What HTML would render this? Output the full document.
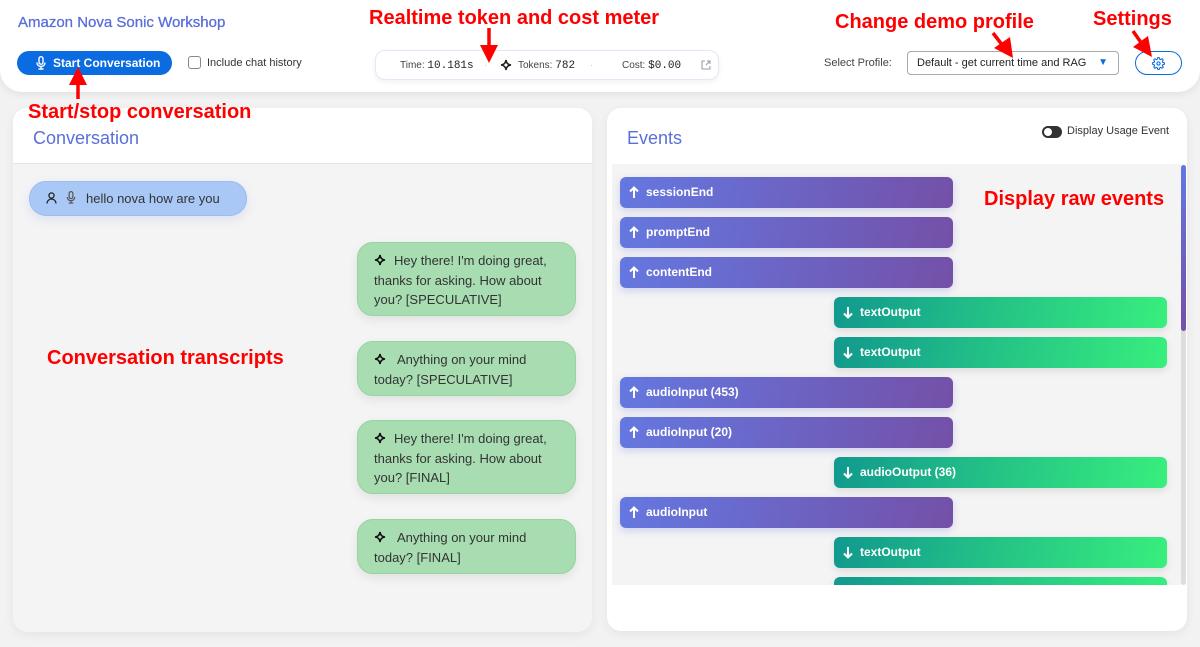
<!DOCTYPE html>
<html><head><meta charset="utf-8"><style>
*{box-sizing:border-box;margin:0;padding:0}
body{width:1200px;height:647px;background:#f2f2f2;font-family:"Liberation Sans",sans-serif;position:relative;overflow:hidden}
.a{position:absolute}
.red{position:absolute;color:#f00;font-weight:bold;font-size:20px;white-space:nowrap}
.hdr{left:0;top:0;width:1200px;height:92px;background:#fff;border-radius:0 0 22px 22px;box-shadow:0 2px 8px rgba(0,0,0,.08)}
.ev{position:absolute;height:31px;border-radius:6px;color:#fff;font-weight:bold;font-size:12px;line-height:31px;padding-left:26px;box-shadow:0 3px 8px rgba(100,110,220,.25)}
.ev svg{position:absolute;left:9px;top:9px}
.up{left:620px;width:333px;background:linear-gradient(100deg,#6478e0,#7450a8)}
.dn{left:834px;width:333px;background:linear-gradient(100deg,#11998e,#38ef7d);box-shadow:0 3px 8px rgba(0,0,0,.1)}
.gb{position:absolute;left:357px;width:219px;background:#a8ddb2;border:1px solid #96d3a2;border-radius:16px;font-size:13px;color:#333;line-height:19.5px;padding:8px 16px;box-shadow:0 4px 10px rgba(0,0,0,.08)}
.sp{display:inline-block;vertical-align:-1px;margin-right:8px}
</style></head><body>
<div class="a hdr"></div>
<div class="a" style="left:18px;top:14px;font-size:15px;color:#5a6fd8;-webkit-text-stroke:0.3px #5a6fd8">Amazon Nova Sonic Workshop</div>
<div class="a" style="left:17px;top:51px;width:155px;height:24px;background:#0b6be0;border-radius:12px;color:#fff;font-size:12px;font-weight:bold;line-height:24px;padding-left:36px">
<svg class="a" style="left:19px;top:5px" width="10" height="14" viewBox="0 0 10 14" fill="none" stroke="#fff" stroke-width="1.4"><rect x="3" y="0.7" width="4" height="7.5" rx="2"/><path d="M1 6.5a4 4 0 0 0 8 0M5 10.5v2.5M2.5 13h5"/></svg>Start Conversation</div>
<div class="a" style="left:188px;top:56px;width:13px;height:13px;border:1px solid #888;border-radius:3px"></div>
<div class="a" style="left:207px;top:57px;font-size:11px;color:#333">Include chat history</div>
<div class="a" style="left:375px;top:50px;width:344px;height:30px;background:#fff;border:1px solid #e2e8f8;border-radius:10px;box-shadow:0 2px 6px rgba(0,0,0,.06);font-size:10px;color:#444">
<span class="a" style="left:24px;top:9px">Time: <span style="font-family:'Liberation Mono',monospace;font-size:11px;color:#222">10.181s</span></span>
<span class="a" style="left:108px;top:9px;color:#ccc">·</span>
<svg class="a" style="left:124px;top:8px" width="12" height="12" viewBox="0 0 12 12" fill="none" stroke="#222" stroke-width="1.6"><path d="M6 1Q6.5 5.5 11 6Q6.5 6.5 6 11Q5.5 6.5 1 6Q5.5 5.5 6 1Z"/></svg>
<span class="a" style="left:142px;top:9px">Tokens: <span style="font-family:'Liberation Mono',monospace;font-size:11px;color:#222">782</span></span>
<span class="a" style="left:214px;top:9px;color:#ccc">·</span>
<span class="a" style="left:246px;top:9px">Cost: <span style="font-family:'Liberation Mono',monospace;font-size:11px;color:#222">$0.00</span></span>
<svg class="a" style="left:325px;top:9px" width="10" height="10" viewBox="0 0 10 10" fill="none" stroke="#999" stroke-width="1"><path d="M4 1H1v8h8V6M5 5l4-4M6 1h3v3"/></svg>
</div>
<div class="a" style="left:824px;top:57px;font-size:11px;color:#444">Select Profile:</div>
<div class="a" style="left:907px;top:51px;width:212px;height:24px;border:1px solid #aaa;border-radius:4px;font-size:11px;color:#222;line-height:22px;padding-left:9px">Default - get current time and RAG<span class="a" style="right:10px;top:0;color:#0b6be0;font-size:10px">▼</span></div>
<div class="a" style="left:1135px;top:51px;width:47px;height:24px;border:1.5px solid #0b6be0;border-radius:12px">
<svg class="a" style="left:16px;top:5px" width="13" height="13" viewBox="0 0 24 24" fill="none" stroke="#0b6be0" stroke-width="2"><circle cx="12" cy="12" r="3"/><path d="M19.4 15a1.7 1.7 0 0 0 .3 1.8l.1.1a2 2 0 1 1-2.8 2.8l-.1-.1a1.7 1.7 0 0 0-1.8-.3 1.7 1.7 0 0 0-1 1.5V21a2 2 0 1 1-4 0v-.1a1.7 1.7 0 0 0-1.1-1.5 1.7 1.7 0 0 0-1.8.3l-.1.1a2 2 0 1 1-2.8-2.8l.1-.1a1.7 1.7 0 0 0 .3-1.8 1.7 1.7 0 0 0-1.5-1H3a2 2 0 1 1 0-4h.1a1.7 1.7 0 0 0 1.5-1.1 1.7 1.7 0 0 0-.3-1.8l-.1-.1a2 2 0 1 1 2.8-2.8l.1.1a1.7 1.7 0 0 0 1.8.3H9a1.7 1.7 0 0 0 1-1.5V3a2 2 0 1 1 4 0v.1a1.7 1.7 0 0 0 1 1.5 1.7 1.7 0 0 0 1.8-.3l.1-.1a2 2 0 1 1 2.8 2.8l-.1.1a1.7 1.7 0 0 0-.3 1.8V9a1.7 1.7 0 0 0 1.5 1H21a2 2 0 1 1 0 4h-.1a1.7 1.7 0 0 0-1.5 1z"/></svg></div>

<!-- left panel -->
<div class="a" style="left:13px;top:108px;width:579px;height:524px;background:#f4f4f4;border-radius:14px;box-shadow:0 3px 10px rgba(0,0,0,.06);overflow:hidden">
<div class="a" style="left:0;top:0;width:579px;height:56px;background:#fff;border-bottom:1px solid #e6e6e6"></div>
</div>
<div class="a" style="left:33px;top:128px;font-size:18px;color:#5a6fd8">Conversation</div>
<div class="a" style="left:29px;top:181px;width:218px;height:35px;background:#a9c8f6;border:1px solid #9cbdf0;border-radius:17px;box-shadow:0 4px 10px rgba(100,120,220,.15);font-size:13px;color:#333;line-height:33px;padding-left:56px">
<svg class="a" style="left:16px;top:10px" width="11" height="12" viewBox="0 0 11 12" fill="none" stroke="#222" stroke-width="1.3"><circle cx="5.5" cy="3.5" r="2.6"/><path d="M1 11.5a4.5 4.5 0 0 1 9 0"/></svg>
<svg class="a" style="left:36px;top:9px" width="10" height="13" viewBox="0 0 10 14" fill="none" stroke="#555" stroke-width="1.3"><rect x="3" y="0.7" width="4" height="7.5" rx="2"/><path d="M1 6.5a4 4 0 0 0 8 0M5 10.5v2.5M2.5 13h5"/></svg>hello nova how are you</div>
<div class="gb" style="top:242px;height:74px"><svg class="sp" width="12" height="12" viewBox="0 0 12 12" fill="none" stroke="#111" stroke-width="1.6"><path d="M6 1Q6.5 5.5 11 6Q6.5 6.5 6 11Q5.5 6.5 1 6Q5.5 5.5 6 1Z"/></svg>Hey there! I'm doing great, thanks for asking. How about you? [SPECULATIVE]</div>
<div class="gb" style="top:341px;height:55px"><svg class="sp" style="margin-right:11px" width="12" height="12" viewBox="0 0 12 12" fill="none" stroke="#111" stroke-width="1.6"><path d="M6 1Q6.5 5.5 11 6Q6.5 6.5 6 11Q5.5 6.5 1 6Q5.5 5.5 6 1Z"/></svg>Anything on your mind today? [SPECULATIVE]</div>
<div class="gb" style="top:420px;height:74px"><svg class="sp" width="12" height="12" viewBox="0 0 12 12" fill="none" stroke="#111" stroke-width="1.6"><path d="M6 1Q6.5 5.5 11 6Q6.5 6.5 6 11Q5.5 6.5 1 6Q5.5 5.5 6 1Z"/></svg>Hey there! I'm doing great, thanks for asking. How about you? [FINAL]</div>
<div class="gb" style="top:519px;height:55px"><svg class="sp" style="margin-right:11px" width="12" height="12" viewBox="0 0 12 12" fill="none" stroke="#111" stroke-width="1.6"><path d="M6 1Q6.5 5.5 11 6Q6.5 6.5 6 11Q5.5 6.5 1 6Q5.5 5.5 6 1Z"/></svg>Anything on your mind today? [FINAL]</div>

<!-- right panel -->
<div class="a" style="left:607px;top:108px;width:580px;height:523px;background:#fff;border-radius:14px;box-shadow:0 3px 10px rgba(0,0,0,.06)"></div>
<div class="a" style="left:612px;top:164px;width:569px;height:421px;background:#f4f4f4"></div>
<div class="a" style="left:1181px;top:165px;width:5px;height:420px;background:#ddd;border-radius:3px"></div>
<div class="a" style="left:1181px;top:165px;width:5px;height:166px;background:linear-gradient(#6478e0,#7450a8);border-radius:3px"></div>
<div class="a" style="left:627px;top:128px;font-size:18px;color:#5a6fd8">Events</div>
<div class="a" style="left:1042px;top:126px;width:20px;height:12px;background:#333;border-radius:6px"><div class="a" style="left:2px;top:2px;width:8px;height:8px;background:#fff;border-radius:50%"></div></div>
<div class="a" style="left:1067px;top:125px;font-size:11px;color:#333">Display Usage Event</div>
<div class="a" style="left:612px;top:164px;width:569px;height:421px;overflow:hidden">
<div style="position:relative;left:-612px;top:-164px">
<div class="ev up" style="top:177px"><svg width="10" height="13" viewBox="0 0 10 13" fill="none" stroke="#fff" stroke-width="2"><path d="M5 12V2M1 5.5L5 1.5 9 5.5"/></svg>sessionEnd</div>
<div class="ev up" style="top:217px"><svg width="10" height="13" viewBox="0 0 10 13" fill="none" stroke="#fff" stroke-width="2"><path d="M5 12V2M1 5.5L5 1.5 9 5.5"/></svg>promptEnd</div>
<div class="ev up" style="top:257px"><svg width="10" height="13" viewBox="0 0 10 13" fill="none" stroke="#fff" stroke-width="2"><path d="M5 12V2M1 5.5L5 1.5 9 5.5"/></svg>contentEnd</div>
<div class="ev dn" style="top:297px"><svg width="10" height="13" viewBox="0 0 10 13" fill="none" stroke="#fff" stroke-width="2"><path d="M5 1v10M1 7.5L5 11.5 9 7.5"/></svg>textOutput</div>
<div class="ev dn" style="top:337px"><svg width="10" height="13" viewBox="0 0 10 13" fill="none" stroke="#fff" stroke-width="2"><path d="M5 1v10M1 7.5L5 11.5 9 7.5"/></svg>textOutput</div>
<div class="ev up" style="top:377px"><svg width="10" height="13" viewBox="0 0 10 13" fill="none" stroke="#fff" stroke-width="2"><path d="M5 12V2M1 5.5L5 1.5 9 5.5"/></svg>audioInput (453)</div>
<div class="ev up" style="top:417px"><svg width="10" height="13" viewBox="0 0 10 13" fill="none" stroke="#fff" stroke-width="2"><path d="M5 12V2M1 5.5L5 1.5 9 5.5"/></svg>audioInput (20)</div>
<div class="ev dn" style="top:457px"><svg width="10" height="13" viewBox="0 0 10 13" fill="none" stroke="#fff" stroke-width="2"><path d="M5 1v10M1 7.5L5 11.5 9 7.5"/></svg>audioOutput (36)</div>
<div class="ev up" style="top:497px"><svg width="10" height="13" viewBox="0 0 10 13" fill="none" stroke="#fff" stroke-width="2"><path d="M5 12V2M1 5.5L5 1.5 9 5.5"/></svg>audioInput</div>
<div class="ev dn" style="top:537px"><svg width="10" height="13" viewBox="0 0 10 13" fill="none" stroke="#fff" stroke-width="2"><path d="M5 1v10M1 7.5L5 11.5 9 7.5"/></svg>textOutput</div>
<div class="ev dn" style="top:577px"><svg width="10" height="13" viewBox="0 0 10 13" fill="none" stroke="#fff" stroke-width="2"><path d="M5 1v10M1 7.5L5 11.5 9 7.5"/></svg>textOutput</div>
</div></div>

<!-- annotations -->
<div class="red" style="left:369px;top:7px">Realtime token and cost meter</div>
<div class="red" style="left:835px;top:11px">Change demo profile</div>
<div class="red" style="left:1093px;top:8px">Settings</div>
<div class="red" style="left:28px;top:101px">Start/stop conversation</div>
<div class="red" style="left:47px;top:347px">Conversation transcripts</div>
<div class="red" style="left:984px;top:188px">Display raw events</div>
<svg class="a" style="left:0;top:0" width="1200" height="120" viewBox="0 0 1200 120">
<g fill="#f00" stroke="#f00" stroke-width="3.5">
<line x1="489" y1="28" x2="489" y2="48"/><path d="M480 45h18l-9 18z" stroke="none"/>
<line x1="78" y1="99" x2="78" y2="82"/><path d="M69 85h18l-9-18z" stroke="none"/>
<line x1="993" y1="33" x2="1003" y2="46"/><path d="M994 48l16-11 3 21z" stroke="none"/>
<line x1="1133" y1="31" x2="1142" y2="44"/><path d="M1133 47l15-11 4 21z" stroke="none"/>
</g></svg>
</body></html>
